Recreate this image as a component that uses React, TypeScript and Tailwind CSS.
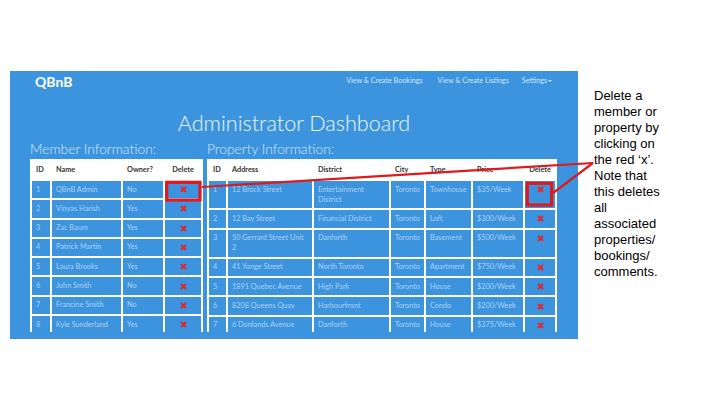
import React from "react";

const members: [string, string, string][] = [
  ["1", "QBnB Admin", "No"],
  ["2", "Vinyas Harish", "Yes"],
  ["3", "Zac Baum", "Yes"],
  ["4", "Patrick Martin", "Yes"],
  ["5", "Laura Brooks", "Yes"],
  ["6", "John Smith", "No"],
  ["7", "Francine Smith", "No"],
  ["8", "Kyle Sunderland", "Yes"],
];

const props: string[][][] = [
  [["1"], ["12 Brock Street"], ["Entertainment", "District"], ["Toronto"], ["Townhouse"], ["$35/Week"]],
  [["2"], ["12 Bay Street"], ["Financial District"], ["Toronto"], ["Loft"], ["$300/Week"]],
  [["3"], ["50 Gerrard Street Unit", "2"], ["Danforth"], ["Toronto"], ["Basement"], ["$500/Week"]],
  [["4"], ["41 Yonge Street"], ["North Toronto"], ["Toronto"], ["Apartment"], ["$750/Week"]],
  [["5"], ["1891 Quebec Avenue"], ["High Park"], ["Toronto"], ["House"], ["$200/Week"]],
  [["6"], ["8208 Queens Quay"], ["Harbourfront"], ["Toronto"], ["Condo"], ["$200/Week"]],
  [["7"], ["6 Donlands Avenue"], ["Danforth"], ["Toronto"], ["House"], ["$375/Week"]],
];

function X() {
  return (
    <div className="flex h-[10px] items-center justify-center">
      <svg width="7" height="7" viewBox="0 0 7 7">
        <path d="M1 1 L6 6 M6 1 L1 6" stroke="#e4262c" strokeWidth="2" />
      </svg>
    </div>
  );
}

const td = "bg-[#3d94de] align-top px-[4px] py-[3.65px] text-[7.3px] leading-[10px] text-[#aed0ef] whitespace-nowrap";
const th = "h-[18px] align-middle px-[4px] text-left text-[7.3px] leading-[10px] font-bold text-[#333333] whitespace-nowrap";

export default function App() {
  return (
    <div className="relative flex h-[405px] w-[720px] bg-white">
      <div className="pl-[10px] pt-[71px]">
        <div className="flex h-[268px] w-[568px] flex-col bg-[#3d94de] font-['Lato','Open_Sans',sans-serif]">
          {/* navbar */}
          <div className="flex h-[21px] items-center justify-between pl-[25px] pr-[26px]">
            <div className="text-[14px] font-bold leading-none text-white">QBnB</div>
            <div className="flex items-center text-[7.2px] text-[#d3e6f8]">
              <span>View &amp; Create Bookings</span>
              <span className="ml-[15px]">View &amp; Create Listings</span>
              <span className="ml-[13px] flex items-center gap-[1px]">
                Settings
                <span className="inline-block h-0 w-0 border-x-[2px] border-t-[2px] border-x-transparent border-t-[#d3e6f8]" />
              </span>
            </div>
          </div>
          {/* title */}
          <div className="mt-[18px] h-[26px] text-center text-[21.6px] font-light leading-[26px] text-[#eef5fc]">
            Administrator Dashboard
          </div>
          {/* columns */}
          <div className="mt-[4px] flex gap-[4px] pl-[20px]">
            <div className="flex w-[173px] flex-col">
              <div className="h-[18px] whitespace-nowrap text-[13.8px] font-light leading-[18px] text-[#d4e7f8]">
                Member Information:
              </div>
              <div className="mt-[1px] h-[173px] overflow-hidden">
                <table className="w-[173px] table-fixed border-separate border-spacing-[2px] bg-white">
                  <colgroup>
                    <col className="w-[18px]" />
                    <col className="w-[69px]" />
                    <col className="w-[40px]" />
                    <col className="w-[36px]" />
                  </colgroup>
                  <thead>
                    <tr>
                      <th className={th}>ID</th>
                      <th className={th}>Name</th>
                      <th className={th}>Owner?</th>
                      <th className={th + " !text-center"}>Delete</th>
                    </tr>
                  </thead>
                  <tbody>
                    {members.map((m) => (
                      <tr key={m[0]}>
                        <td className={td}>{m[0]}</td>
                        <td className={td}>{m[1]}</td>
                        <td className={td}>{m[2]}</td>
                        <td className={td}>
                          <X />
                        </td>
                      </tr>
                    ))}
                  </tbody>
                </table>
              </div>
            </div>
            <div className="flex w-[350px] flex-col">
              <div className="h-[18px] whitespace-nowrap text-[13.8px] font-light leading-[18px] text-[#d4e7f8]">
                Property Information:
              </div>
              <div className="mt-[1px] h-[173px] overflow-hidden">
                <table className="w-[350px] table-fixed border-separate border-spacing-[2px] bg-white">
                  <colgroup>
                    <col className="w-[17px]" />
                    <col className="w-[84px]" />
                    <col className="w-[75px]" />
                    <col className="w-[33px]" />
                    <col className="w-[45px]" />
                    <col className="w-[50px]" />
                    <col className="w-[30px]" />
                  </colgroup>
                  <thead>
                    <tr>
                      <th className={th}>ID</th>
                      <th className={th}>Address</th>
                      <th className={th}>District</th>
                      <th className={th}>City</th>
                      <th className={th}>Type</th>
                      <th className={th}>Price</th>
                      <th className={th + " !text-center"}>Delete</th>
                    </tr>
                  </thead>
                  <tbody>
                    {props.map((row) => (
                      <tr key={row[0][0]}>
                        {row.map((cell, i) => (
                          <td key={i} className={td}>
                            {cell.map((line, j) => (
                              <div key={j}>{line}</div>
                            ))}
                          </td>
                        ))}
                        <td className={td}>
                          <X />
                        </td>
                      </tr>
                    ))}
                  </tbody>
                </table>
              </div>
            </div>
          </div>
        </div>
      </div>
      {/* annotation text */}
      <div className="pl-[16px] pt-[88px] font-['Liberation_Sans',Arial,sans-serif] text-[13px] leading-[16px] text-black">
        Delete a<br />
        member or<br />
        property by<br />
        clicking on<br />
        the red ‘x’.<br />
        Note that<br />
        this deletes<br />
        all<br />
        associated<br />
        properties/<br />
        bookings/<br />
        comments.
      </div>
      {/* callout overlay */}
      <svg className="pointer-events-none absolute left-0 top-0" width="720" height="405">
        <rect x="166.7" y="182.3" width="33.3" height="17.7" fill="none" stroke="#dd1a1f" strokeWidth="3.2" />
        <rect x="527.3" y="183.3" width="24.3" height="21.7" fill="none" stroke="#dd1a1f" strokeWidth="3.2" />
        <line x1="202" y1="187" x2="593" y2="163" stroke="#dd1a1f" strokeWidth="2.2" />
        <line x1="553" y1="193" x2="593" y2="163" stroke="#dd1a1f" strokeWidth="2.2" />
      </svg>
    </div>
  );
}
